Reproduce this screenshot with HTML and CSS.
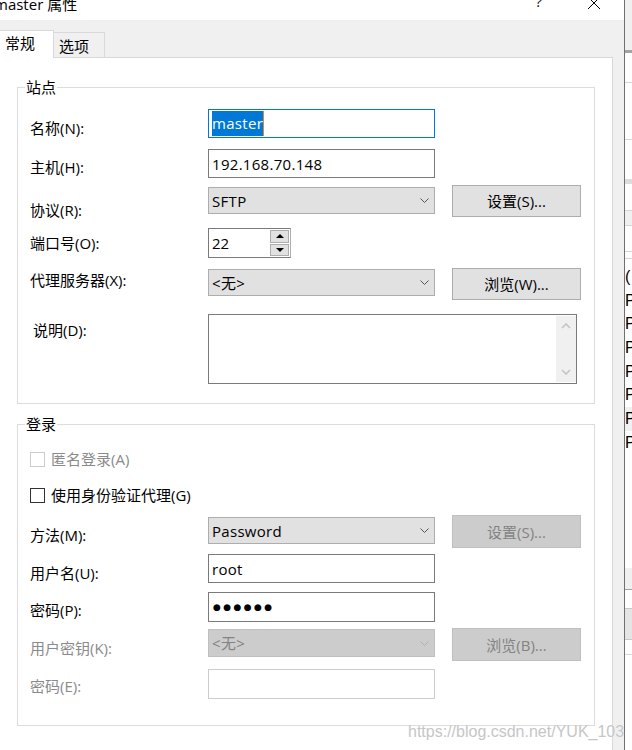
FILE: index.html
```html
<!DOCTYPE html>
<html lang="zh-CN">
<head>
<meta charset="utf-8">
<title>master 属性</title>
<link rel="stylesheet" href="styles.css">
</head>
<body>
<div class="screen">
  <div class="dialog">
    <div class="titlebar">
      <span class="title">master 属性</span>
      <span class="help">?</span>
      <svg class="close" width="14" height="14" viewBox="0 0 14 14"><path d="M1 1L13 13M13 1L1 13" stroke="#000" stroke-width="1" fill="none"/></svg>
    </div>
    <div class="client">
      <div class="tabs">
        <div class="tab active">常规</div>
        <div class="tab">选项</div>
      </div>
      <div class="panel">
        <fieldset class="group site">
          <legend>站点</legend>
          <div class="row">
            <span class="lbl o12">名称(N):</span>
            <div class="edit focus"><span class="sel">master</span><span class="caret"></span></div>
          </div>
          <div class="row gap11">
            <span class="lbl o11">主机(H):</span>
            <div class="edit">192.168.70.148</div>
          </div>
          <div class="row gap7">
            <span class="lbl o18">协议(R):</span>
            <div class="combo m2"><span>SFTP</span><svg class="chev" width="9" height="5" viewBox="0 0 9 5"><path d="M0.5 0.5L4.5 4.5L8.5 0.5" stroke="#555" fill="none"/></svg></div>
            <div class="btn">设置(S)...</div>
          </div>
          <div class="row gap11">
            <span class="lbl o8">端口号(O):</span>
            <div class="spin">
              <div class="spin-val">22</div>
              <div class="spin-btns">
                <div class="spin-btn"><span class="tri-up"></span></div>
                <div class="spin-btn"><span class="tri-down"></span></div>
              </div>
            </div>
          </div>
          <div class="row gap10">
            <span class="lbl o5">代理服务器(X):</span>
            <div class="combo m1"><span>&lt;无&gt;</span><svg class="chev" width="9" height="5" viewBox="0 0 9 5"><path d="M0.5 0.5L4.5 4.5L8.5 0.5" stroke="#555" fill="none"/></svg></div>
            <div class="btn">浏览(W)...</div>
          </div>
          <div class="row gap14 memo-row">
            <span class="lbl o9 indent">说明(D):</span>
            <div class="memo">
              <div class="vscroll">
                <svg width="10" height="6" viewBox="0 0 10 6"><path d="M1 5L5 1L9 5" stroke="#c4c4c4" stroke-width="1.6" fill="none"/></svg>
                <svg width="10" height="6" viewBox="0 0 10 6"><path d="M1 1L5 5L9 1" stroke="#c4c4c4" stroke-width="1.6" fill="none"/></svg>
              </div>
            </div>
          </div>
        </fieldset>

        <fieldset class="group login">
          <legend>登录</legend>
          <div class="check disabled"><span class="box"></span><span>匿名登录(A)</span></div>
          <div class="check gap16"><span class="box"></span><span>使用身份验证代理(G)</span></div>
          <div class="row gap10">
            <span class="lbl o13">方法(M):</span>
            <div class="combo m2"><span>Password</span><svg class="chev" width="9" height="5" viewBox="0 0 9 5"><path d="M0.5 0.5L4.5 4.5L8.5 0.5" stroke="#555" fill="none"/></svg></div>
            <div class="btn tall disabled">设置(S)...</div>
          </div>
          <div class="row gap6">
            <span class="lbl o12">用户名(U):</span>
            <div class="edit">root</div>
          </div>
          <div class="row gap9">
            <span class="lbl o11">密码(P):</span>
            <div class="edit h30"><span class="dots">●●●●●●</span></div>
          </div>
          <div class="row gap6">
            <span class="lbl o13 disabled">用户密钥(K):</span>
            <div class="combo m1 h28 disabled"><span>&lt;无&gt;</span><svg class="chev" width="9" height="5" viewBox="0 0 9 5"><path d="M0.5 0.5L4.5 4.5L8.5 0.5" stroke="#b0b0b0" fill="none"/></svg></div>
            <div class="btn tall disabled">浏览(B)...</div>
          </div>
          <div class="row gap8">
            <span class="lbl o10 disabled">密码(E):</span>
            <div class="edit h30 disabled"></div>
          </div>
        </fieldset>
      </div>
    </div>
  </div>
  <div class="other">
    <div class="o-head"></div>
    <div class="o-dark"></div>
    <div class="o-cell h30 line"></div>
    <div class="o-cell h57 line"></div>
    <div class="o-cell h39"></div>
    <div class="o-band"></div>
    <div class="o-cell h27 line"></div>
    <div class="o-cell h15 grey line"></div>
    <div class="o-cell h26 line"></div>
    <div class="o-cell h7 line"></div>
    <div class="o-text first">(</div>
    <div class="o-text">P</div>
    <div class="o-text">P</div>
    <div class="o-text">P</div>
    <div class="o-text">P</div>
    <div class="o-text">P</div>
    <div class="o-text grey">P</div>
    <div class="o-text">P</div>
    <div class="o-cell h114"></div>
    <div class="o-cell h22 grey darkline"></div>
    <div class="o-cell h18"></div>
    <div class="o-cell h32 mid"></div>
    <div class="o-cell h15 line"></div>
  </div>
</div>
<div class="watermark">https://blog.csdn.net/YUK_103</div>
</body>
</html>
```

FILE: styles.css
```css
* { box-sizing: border-box; }
html, body { margin: 0; padding: 0; }
body {
  width: 632px;
  height: 750px;
  overflow: hidden;
  position: relative;
  background: #fff;
  color: #000;
  font-family: "Open Sans", "Noto Sans CJK SC", sans-serif;
  font-size: 15px;
  line-height: 20px;
}
.screen { display: flex; height: 750px; }

.dialog {
  width: 625px;
  flex: none;
  display: flex;
  flex-direction: column;
  border-right: 1px solid #707070;
}

/* title bar (top cropped) */
.titlebar {
  height: 20px;
  flex: none;
  background: #fff;
  display: flex;
  align-items: flex-start;
  overflow: hidden;
}
.title { margin-left: -6px; margin-top: -6px; white-space: nowrap; }
.help { margin-left: auto; margin-top: -9px; margin-right: 45px; color: #222; }
.close { margin-top: -4px; margin-right: 23px; flex: none; }

.client {
  flex: 1;
  background: #f0f0f0;
  padding: 10px 11px 0 0;
  display: flex;
  flex-direction: column;
}

/* tabs */
.tabs {
  display: flex;
  align-items: flex-end;
  height: 28px;
  margin-bottom: -1px;
}
.tab {
  border-top: 1px solid #d9d9d9;
  border-right: 1px solid #d9d9d9;
  padding-left: 5px;
  display: flex;
  align-items: center;
  background: #f0f0f0;
  height: 26px;
  width: 51px;
}
.tab.active {
  position: relative;
  z-index: 1;
  background: #fff;
  height: 28px;
  width: 55px;
  margin-left: -1px;
  border-left: 1px solid #d9d9d9;
  padding-left: 5px;
  padding-bottom: 3px;
}

.panel {
  flex: 1;
  background: #fff;
  border-top: 1px solid #d9d9d9;
  border-right: 1px solid #d9d9d9;
}

/* group boxes */
.group {
  margin: 19px 17px 0 17px;
  border: 1px solid #dcdcdc;
  padding: 12px 0 19px 12px;
  min-width: 0;
}
.group.login { margin-top: 10px; padding-top: 15px; padding-bottom: 26px; }
.group legend {
  padding: 0 1px;
  margin-left: -5px;
  line-height: 20px;
}

.row {
  display: grid;
  grid-template-columns: 161px 227px 129px;
  column-gap: 17px;
  align-items: start;
}
.gap6 { margin-top: 6px; }
.gap7 { margin-top: 7px; }
.gap8 { margin-top: 8px; }
.gap9 { margin-top: 9px; }
.gap10 { margin-top: 10px; }
.gap11 { margin-top: 11px; }
.gap14 { margin-top: 14px; }
.gap16 { margin-top: 16px; }

.lbl { white-space: nowrap; line-height: 14px; }
.o5 { padding-top: 5px; }
.o8 { padding-top: 8px; }
.o9 { padding-top: 9px; }
.o10 { padding-top: 10px; }
.o11 { padding-top: 11px; }
.o12 { padding-top: 12px; }
.o13 { padding-top: 13px; }
.o18 { padding-top: 18px; }
.indent { padding-left: 3px; }
.lbl.disabled { color: #8a8a8a; }

/* edit boxes */
.edit {
  height: 29px;
  border: 1px solid #7a7a7a;
  background: #fff;
  padding-left: 3px;
  display: flex;
  align-items: center;
  letter-spacing: 0.3px;
  white-space: nowrap;
}
.edit.h30 { height: 30px; }
.edit.focus { border-color: #0078d7; }
.edit.disabled { border-color: #cccccc; }
.sel {
  background: #0078d7;
  color: #fff;
  line-height: 25px;
  display: inline-block;
}
.caret { width: 1px; height: 25px; background: #e08a2c; }
.dots {
  font-family: "DejaVu Sans", sans-serif;
  font-size: 9px;
  letter-spacing: 2.4px;
  padding-left: 1px;
}

/* combo boxes */
.combo {
  height: 27px;
  background: #e1e1e1;
  border: 1px solid #adadad;
  padding: 0 5px 0 3px;
  display: flex;
  align-items: center;
  justify-content: space-between;
  letter-spacing: 0.3px;
}
.combo.h28 { height: 28px; }
.m1 { margin-top: 1px; }
.m2 { margin-top: 2px; }
.combo.disabled { background: #cccccc; border-color: #bfbfbf; color: #838383; }
.chev { flex: none; }

/* buttons */
.btn {
  height: 32px;
  background: #e1e1e1;
  border: 1px solid #adadad;
  display: flex;
  align-items: center;
  justify-content: center;
}
.btn.tall { height: 33px; }
.btn.disabled { background: #cccccc; border-color: #bfbfbf; color: #838383; }

/* spinner */
.spin {
  width: 83px;
  height: 30px;
  border: 1px solid #7a7a7a;
  border-right-color: #adadad;
  display: flex;
  background: #fff;
}
.spin-val { flex: 1; padding-left: 3px; display: flex; align-items: center; }
.spin-btns {
  width: 20px;
  display: flex;
  flex-direction: column;
  padding: 1px 1px 1px 0;
  gap: 1px;
}
.spin-btn {
  flex: 1;
  background: #e1e1e1;
  border: 1px solid #adadad;
  display: flex;
  align-items: center;
  justify-content: center;
}
.tri-up, .tri-down { width: 0; height: 0; border-left: 4px solid transparent; border-right: 4px solid transparent; }
.tri-up { border-bottom: 4px solid #000; }
.tri-down { border-top: 4px solid #000; }

/* memo */
.memo-row { grid-template-columns: 161px 369px; }
.memo {
  height: 70px;
  border: 1px solid #7a7a7a;
  background: #fff;
  padding: 1px 0;
  display: flex;
  justify-content: flex-end;
}
.vscroll {
  width: 20px;
  background: #f0f0f0;
  display: flex;
  flex-direction: column;
  justify-content: space-between;
  align-items: center;
  padding: 7px 0;
}

/* checkboxes */
.check { display: flex; align-items: center; gap: 6px; height: 20px; }
.box { width: 15px; height: 15px; border: 1px solid #333; background: #fff; flex: none; }
.check.disabled { color: #8a8a8a; }
.check.disabled .box { border-color: #cccccc; }

/* neighbouring window strip */
.other {
  flex: 1;
  min-width: 0;
  overflow: hidden;
  background: #fff;
  display: flex;
  flex-direction: column;
  font-family: "Liberation Sans", sans-serif;
  font-size: 16px;
}
.other > div { flex: none; }
.o-head { height: 50px; background: #f0f0f0; }
.o-dark { height: 3px; background: #a3a3a3; }
.o-cell.line { border-bottom: 1px solid #d5d5d5; }
.o-cell.darkline { border-bottom: 1px solid #a0a0a0; }
.o-cell.grey { background: #f0f0f0; }
.o-cell.mid { background: #e5e5e5; border-top: 1px solid #c8c8c8; border-bottom: 1px solid #c8c8c8; }
.o-band { height: 5px; background: #dcdcdc; }
.h7 { height: 7px; }
.h15 { height: 15px; }
.h18 { height: 18px; }
.h22 { height: 22px; }
.h26 { height: 26px; }
.h27 { height: 27px; }
.h30 { height: 30px; }
.h32 { height: 32px; }
.h39 { height: 39px; }
.h57 { height: 57px; }
.h114 { height: 114px; }
.o-text { height: 23.7px; line-height: 23.7px; white-space: nowrap; }
.o-text.first { height: 29.5px; padding-top: 6px; }
.o-text.grey { background: #f0f0f0; }

.watermark {
  position: absolute;
  left: 408px;
  top: 724px;
  font-family: "Liberation Sans", sans-serif;
  font-size: 16px;
  line-height: 16px;
  color: #c6c6c6;
  white-space: nowrap;
  text-shadow: 0 0 1px #fff;
}
```
